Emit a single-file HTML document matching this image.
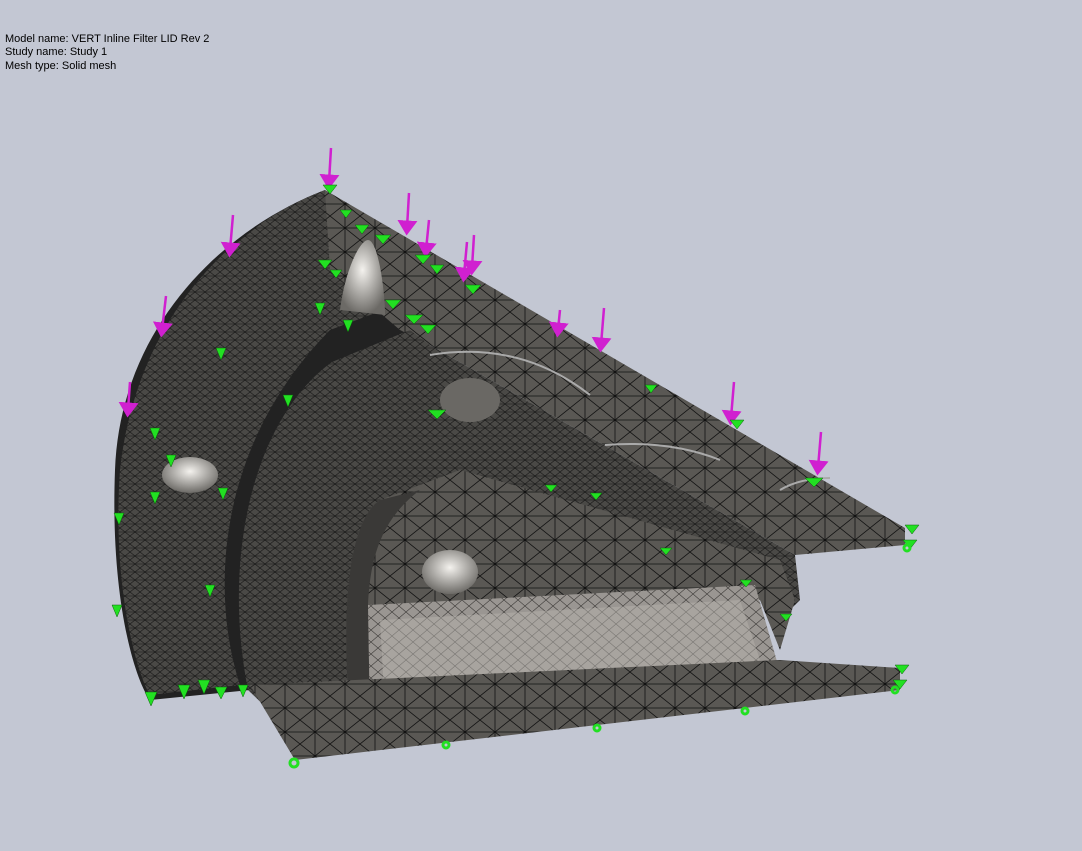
<!DOCTYPE html>
<html><head><style>
html,body{margin:0;padding:0;background:#c3c7d3;width:1082px;height:851px;overflow:hidden}
.t{position:absolute;left:5px;font:11px/13px "Liberation Sans",sans-serif;color:#000}
</style></head><body>
<div class="t" style="top:33px">Model name: VERT Inline Filter LID Rev 2</div>
<div class="t" style="top:46px">Study name: Study 1</div>
<div class="t" style="top:60px">Mesh type: Solid mesh</div>
<svg width="1082" height="851" style="position:absolute;left:0;top:0">
<defs>
<pattern id="m" width="30" height="24" patternUnits="userSpaceOnUse">
<rect width="30" height="24" fill="#5a5854"/>
<path d="M0 0L30 24M30 0L0 24M0 12H30M15 0V24" stroke="#111" stroke-width="0.8"/>
</pattern>
<pattern id="f" width="10" height="8" patternUnits="userSpaceOnUse">
<rect width="10" height="8" fill="#4a4946"/>
<path d="M0 0L10 8M10 0L0 8M0 4H10" stroke="#161616" stroke-width="0.6"/>
</pattern>
<pattern id="l" width="14" height="12" patternUnits="userSpaceOnUse">
<rect width="14" height="12" fill="#9a9692"/>
<path d="M0 0L14 12M14 0L0 12" stroke="#3a3836" stroke-width="0.6"/>
</pattern>
<radialGradient id="s" cx="0.5" cy="0.4" r="0.6"><stop offset="0" stop-color="#f4f2ee"/><stop offset="1" stop-color="#6c6a66"/></radialGradient>
<marker id="ah" markerWidth="6" markerHeight="8" refX="3" refY="4" orient="auto"><path d="M0 0L6 4L0 8Z" fill="#d020d0"/></marker>
</defs>
<!-- seam backing -->
<path d="M325 190 C220 230 120 330 115 470 C110 600 135 680 150 700 L250 690 L360 720 L420 340 Z" fill="#222"/>
<!-- outer shell -->
<path d="M325 190 C220 230 135 330 120 470 C112 580 135 670 150 695 L240 685 C212 600 212 450 330 330 L410 300 Z" fill="url(#f)"/>
<!-- top plate -->
<path d="M325 190 L905 528 L905 545 L795 555 L430 345 L400 330 L330 270 Z" fill="url(#m)"/>
<!-- middle arch -->
<path d="M248 690 C222 560 252 420 332 362 L410 330 L430 345 L795 555 L800 600 L780 620 L760 600 L370 600 L360 720 L300 740 Z" fill="url(#f)"/>
<path d="M350 720 C340 600 350 520 380 500 L460 470 L780 560 L795 600 L780 650 L760 600 Z" fill="url(#m)"/>
<path d="M350 720 C340 600 350 520 380 500 L420 490 C380 520 370 560 368 605 L370 722 Z" fill="#3a3937"/>
<!-- light inner triangle -->
<path d="M368 605 L755 585 L778 665 L370 722 Z" fill="url(#l)"/>
<path d="M380 620 L740 600 L760 660 L385 710 Z" fill="#b5b1ac" opacity="0.5"/>
<!-- bottom plate -->
<path d="M250 685 L780 660 L900 668 L900 690 L295 760 Z" fill="url(#m)"/>
<!-- spheres / bosses -->
<ellipse cx="190" cy="475" rx="28" ry="18" fill="url(#s)"/>
<ellipse cx="450" cy="572" rx="28" ry="22" fill="url(#s)"/>
<path d="M340 310 C345 270 360 240 368 240 C378 240 385 290 385 315 Z" fill="url(#s)"/>
<ellipse cx="470" cy="400" rx="30" ry="22" fill="#6a6864"/>
<!-- arcs on top plate -->
<path d="M430 355 Q520 340 590 395" stroke="#aaa" stroke-width="2" fill="none"/>
<path d="M605 445 Q670 440 720 460" stroke="#aaa" stroke-width="2" fill="none"/>
<path d="M780 490 Q800 478 830 478" stroke="#aaa" stroke-width="2" fill="none"/>
<!-- magenta arrows -->
<g stroke="#d020d0" stroke-width="2.5" marker-end="url(#ah)">
<line x1="331" y1="148" x2="329" y2="182"/><line x1="233" y1="215" x2="230" y2="250"/>
<line x1="166" y1="296" x2="162" y2="330"/><line x1="409" y1="193" x2="407" y2="228"/>
<line x1="429" y1="220" x2="426" y2="250"/><line x1="467" y1="242" x2="464" y2="275"/>
<line x1="474" y1="235" x2="472" y2="268"/><line x1="604" y1="308" x2="601" y2="345"/>
<line x1="560" y1="310" x2="558" y2="330"/><line x1="734" y1="382" x2="731" y2="418"/>
<line x1="821" y1="432" x2="818" y2="468"/><line x1="130" y1="382" x2="128" y2="410"/>
</g>
<!-- green arrows -->
<g fill="#22e022" stroke="#0a600a" stroke-width="0.5">
<path d="M323 185h14l-7 9z"/><path d="M340 210h12l-6 8z"/><path d="M355 225h14l-7 9z"/>
<path d="M318 260h14l-7 9z"/><path d="M330 270h12l-6 8z"/><path d="M375 235h16l-8 9z"/>
<path d="M415 255h16l-8 9z"/><path d="M430 265h14l-7 9z"/><path d="M465 285h16l-8 9z"/>
<path d="M385 300h16l-8 9z"/><path d="M405 315h18l-9 9z"/><path d="M420 325h16l-8 9z"/>
<path d="M428 410h18l-9 9z"/><path d="M645 385h12l-6 8z"/><path d="M730 420h14l-7 9z"/>
<path d="M805 478h18l-9 9z"/><path d="M905 525h14l-7 9z"/><path d="M903 540h14l-7 9z"/>
<path d="M545 485h12l-6 7z"/><path d="M590 493h12l-6 7z"/><path d="M660 548h12l-6 7z"/>
<path d="M740 580h12l-6 7z"/><path d="M780 614h12l-6 7z"/><path d="M895 665h14l-7 9z"/>
<path d="M893 680h14l-7 9z"/><path d="M216 348h10l-5 12z"/><path d="M150 428h10l-5 12z"/>
<path d="M166 455h10l-5 12z"/><path d="M150 492h10l-5 12z"/><path d="M218 488h10l-5 12z"/>
<path d="M114 513h10l-5 12z"/><path d="M205 585h10l-5 12z"/><path d="M112 605h10l-5 12z"/>
<path d="M145 692h12l-6 14z"/><path d="M178 685h12l-6 14z"/><path d="M198 680h12l-6 14z"/>
<path d="M215 687h12l-6 12z"/><path d="M238 685h10l-5 12z"/><path d="M283 395h10l-5 12z"/>
<path d="M315 303h10l-5 12z"/><path d="M343 320h10l-5 12z"/>
</g>
<g fill="none" stroke="#22e022" stroke-width="3">
<circle cx="294" cy="763" r="4"/><circle cx="446" cy="745" r="3"/><circle cx="597" cy="728" r="3"/>
<circle cx="745" cy="711" r="3"/><circle cx="895" cy="690" r="3"/><circle cx="907" cy="548" r="3"/>
</g>
</svg>
</body></html>
